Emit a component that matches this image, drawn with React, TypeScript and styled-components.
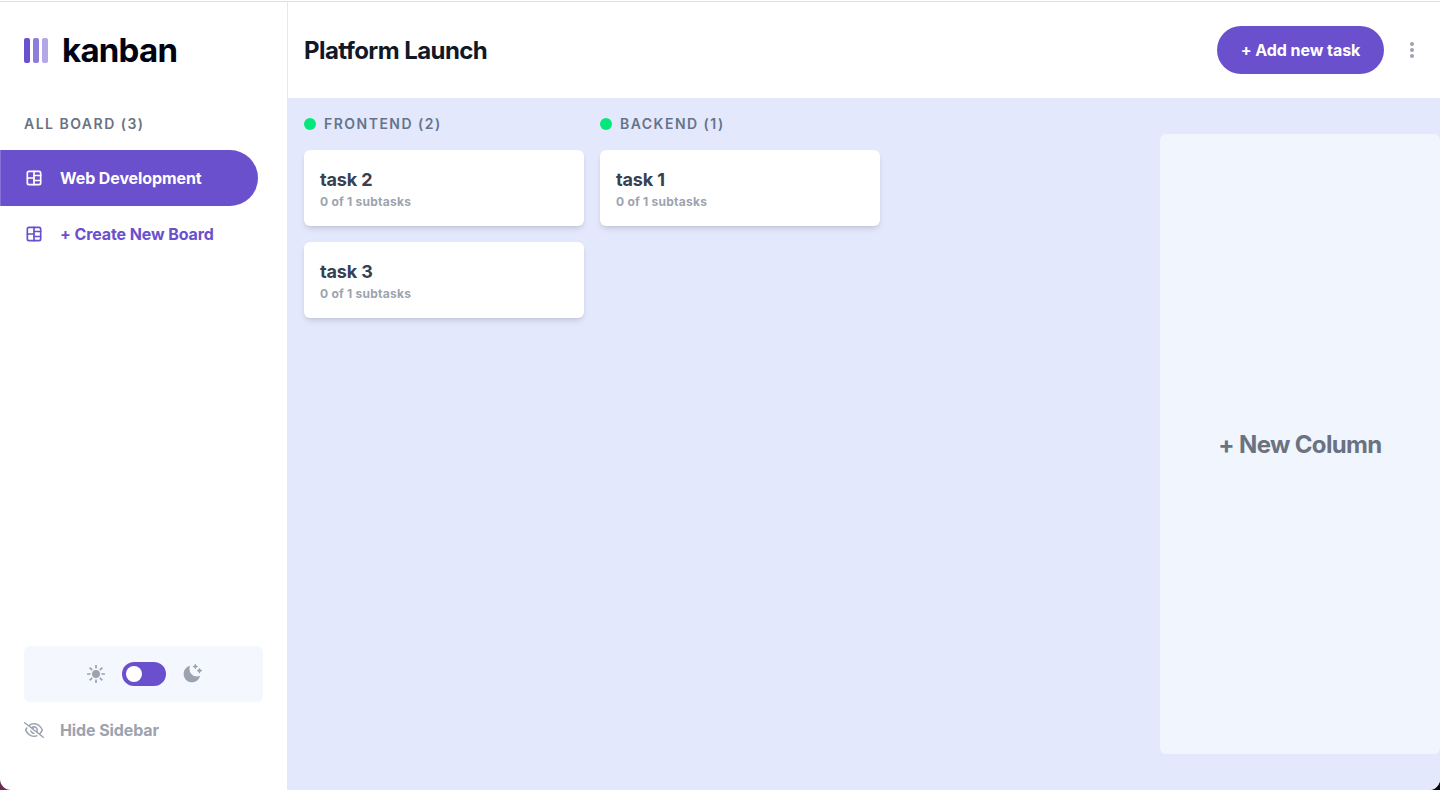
import React from "react";
import styled, { createGlobalStyle } from "styled-components";
import { TbLayoutBoardSplit } from "react-icons/tb";
import { FaRegEyeSlash } from "react-icons/fa6";
import { RiMoonClearFill } from "react-icons/ri";
import { IoSunnySharp } from "react-icons/io5";

const purple = "#6a50cd";

const GlobalStyle = createGlobalStyle`
  * { box-sizing: border-box; }
  body {
    margin: 0;
    background: linear-gradient(90deg, #6b2a50 50%, #0a0a0a 50%);
    font-family: Inter, "Liberation Sans", sans-serif;
  }
  button { font: inherit; border: 0; background: none; padding: 0; cursor: pointer; }
  h1, h2, h3, p { margin: 0; }
`;

const Page = styled.div`
  display: flex;
  flex-direction: column;
  height: 790px;
  overflow: hidden;
  background: #fff;
  border-radius: 0 0 11px 11px;
`;

const TopEdge = styled.div`
  flex: none;
  height: 2px;
  border-bottom: 1px solid #e1e1e1;
`;

const Shell = styled.div`
  display: flex;
  flex: 1;
  min-height: 0;
`;

const Sidebar = styled.aside`
  display: flex;
  flex-direction: column;
  width: 288px;
  border-right: 1px solid #e3e8fc;
`;

const Brand = styled.div`
  display: flex;
  align-items: center;
  gap: 14px;
  height: 96px;
  padding-left: 24px;
`;

const Wordmark = styled.span`
  font-size: 33px;
  font-weight: 700;
  line-height: 40px;
  letter-spacing: -0.75px;
  color: #000112;
`;

const Label = styled.h2<{ $color: string }>`
  font-size: 14px;
  font-weight: 600;
  line-height: 20px;
  letter-spacing: 1.48px;
  text-transform: uppercase;
  color: ${(p) => p.$color};
`;

const BoardsLabel = styled(Label)`
  padding: 16px 24px;
`;

const SideItem = styled.button<{ $active?: boolean; $muted?: boolean }>`
  display: flex;
  align-items: center;
  gap: 16px;
  width: 258px;
  height: 56px;
  padding-left: 24px;
  border-radius: 0 28px 28px 0;
  font-size: 16px;
  font-weight: 700;
  letter-spacing: -0.1px;
  color: ${(p) => (p.$active ? "#fff" : p.$muted ? "#9ca3af" : purple)};
  background: ${(p) => (p.$active ? purple : "transparent")};
  box-shadow: ${(p) => (p.$active ? "inset 1px 0 #8570d5" : "none")};
`;

const SidebarFooter = styled.div`
  margin-top: auto;
  padding-bottom: 32px;
`;

const ThemePanel = styled.div`
  display: flex;
  align-items: center;
  justify-content: center;
  gap: 16px;
  height: 56px;
  margin: 0 24px;
  border-radius: 6px;
  color: #9ca3af;
  background: #f4f7fe;
`;

const Switch = styled.button`
  display: flex;
  align-items: center;
  width: 44px;
  height: 24px;
  padding: 0 4px;
  border-radius: 12px;
  background: ${purple};
`;

const Knob = styled.span`
  width: 16px;
  height: 16px;
  border-radius: 50%;
  background: #fff;
`;

const Main = styled.div`
  display: flex;
  flex: 1;
  flex-direction: column;
  min-width: 0;
`;

const Header = styled.header`
  display: flex;
  align-items: center;
  justify-content: space-between;
  height: 96px;
  padding: 0 16px;
`;

const Title = styled.h1`
  padding-top: 2px;
  font-size: 24px;
  font-weight: 700;
  line-height: 32px;
  letter-spacing: -0.57px;
  color: #111827;
`;

const Actions = styled.div`
  display: flex;
  align-items: center;
  gap: 16px;
`;

const AddTask = styled.button`
  width: 167px;
  height: 48px;
  border-radius: 24px;
  font-size: 16px;
  font-weight: 700;
  letter-spacing: -0.05px;
  color: #fff;
  background: ${purple};
`;

const MoreButton = styled.button`
  display: flex;
  justify-content: center;
  width: 24px;
  color: #9ca3af;
`;

const Board = styled.main`
  display: flex;
  flex: 1;
  gap: 16px;
  padding-left: 16px;
  background: #e3e8fc;
`;

const Column = styled.section`
  display: flex;
  flex-direction: column;
  width: 280px;
`;

const ColumnHead = styled.div`
  display: flex;
  align-items: center;
  gap: 8px;
  height: 52px;
`;

const Dot = styled.span`
  width: 12px;
  height: 12px;
  border-radius: 50%;
  background: #05e77a;
`;

const CardList = styled.div`
  display: flex;
  flex-direction: column;
  gap: 16px;
`;

const Card = styled.article`
  height: 76px;
  padding: 16px;
  border-radius: 6px;
  background: #fff;
  box-shadow: 0 4px 6px -1px rgba(0, 0, 0, 0.1), 0 2px 4px -2px rgba(0, 0, 0, 0.1);
`;

const CardTitle = styled.h3`
  font-size: 18px;
  font-weight: 650;
  line-height: 28px;
  letter-spacing: -0.15px;
  color: #374151;
`;

const CardMeta = styled.p`
  font-size: 12px;
  font-weight: 700;
  line-height: 16px;
  letter-spacing: 0.24px;
  color: #9ca3af;
`;

const NewColumn = styled.button`
  width: 280px;
  margin: 36px 0 36px auto;
  border-radius: 6px;
  font-size: 24px;
  font-weight: 700;
  letter-spacing: -0.65px;
  color: #6b7280;
  background: #f0f5fe;
`;

const columns = [
  { name: "Frontend", tasks: ["task 2", "task 3"] },
  { name: "Backend", tasks: ["task 1"] },
];

const BarsLogo = () => (
  <svg width="24" height="25" viewBox="0 0 24 25" fill={purple}>
    <rect width="6" height="25" rx="2" />
    <rect x="9" width="6" height="25" rx="2" opacity=".75" />
    <rect x="18" width="6" height="25" rx="2" opacity=".5" />
  </svg>
);

const MoreIcon = () => (
  <svg width="4" height="16" viewBox="0 0 4 16" fill="currentColor">
    <circle cx="2" cy="2" r="2" />
    <circle cx="2" cy="8" r="2" />
    <circle cx="2" cy="14" r="2" />
  </svg>
);

export default function App() {
  return (
    <>
      <GlobalStyle />
      <Page>
        <TopEdge />
        <Shell>
          <Sidebar>
            <Brand>
              <BarsLogo />
              <Wordmark>kanban</Wordmark>
            </Brand>
            <BoardsLabel $color="#6b7280">All Board (3)</BoardsLabel>
            <SideItem $active>
              <TbLayoutBoardSplit size={20} />
              Web Development
            </SideItem>
            <SideItem>
              <TbLayoutBoardSplit size={20} />+ Create New Board
            </SideItem>
            <SidebarFooter>
              <ThemePanel>
                <IoSunnySharp size={20} />
                <Switch aria-label="Toggle theme">
                  <Knob />
                </Switch>
                <RiMoonClearFill size={20} />
              </ThemePanel>
              <SideItem $muted>
                <FaRegEyeSlash size={20} />
                Hide Sidebar
              </SideItem>
            </SidebarFooter>
          </Sidebar>
          <Main>
            <Header>
              <Title>Platform Launch</Title>
              <Actions>
                <AddTask>+ Add new task</AddTask>
                <MoreButton aria-label="Board options">
                  <MoreIcon />
                </MoreButton>
              </Actions>
            </Header>
            <Board>
              {columns.map((column) => (
                <Column key={column.name}>
                  <ColumnHead>
                    <Dot />
                    <Label $color="#64748b">
                      {column.name} ({column.tasks.length})
                    </Label>
                  </ColumnHead>
                  <CardList>
                    {column.tasks.map((task) => (
                      <Card key={task}>
                        <CardTitle>{task}</CardTitle>
                        <CardMeta>0 of 1 subtasks</CardMeta>
                      </Card>
                    ))}
                  </CardList>
                </Column>
              ))}
              <NewColumn>+ New Column</NewColumn>
            </Board>
          </Main>
        </Shell>
      </Page>
    </>
  );
}
